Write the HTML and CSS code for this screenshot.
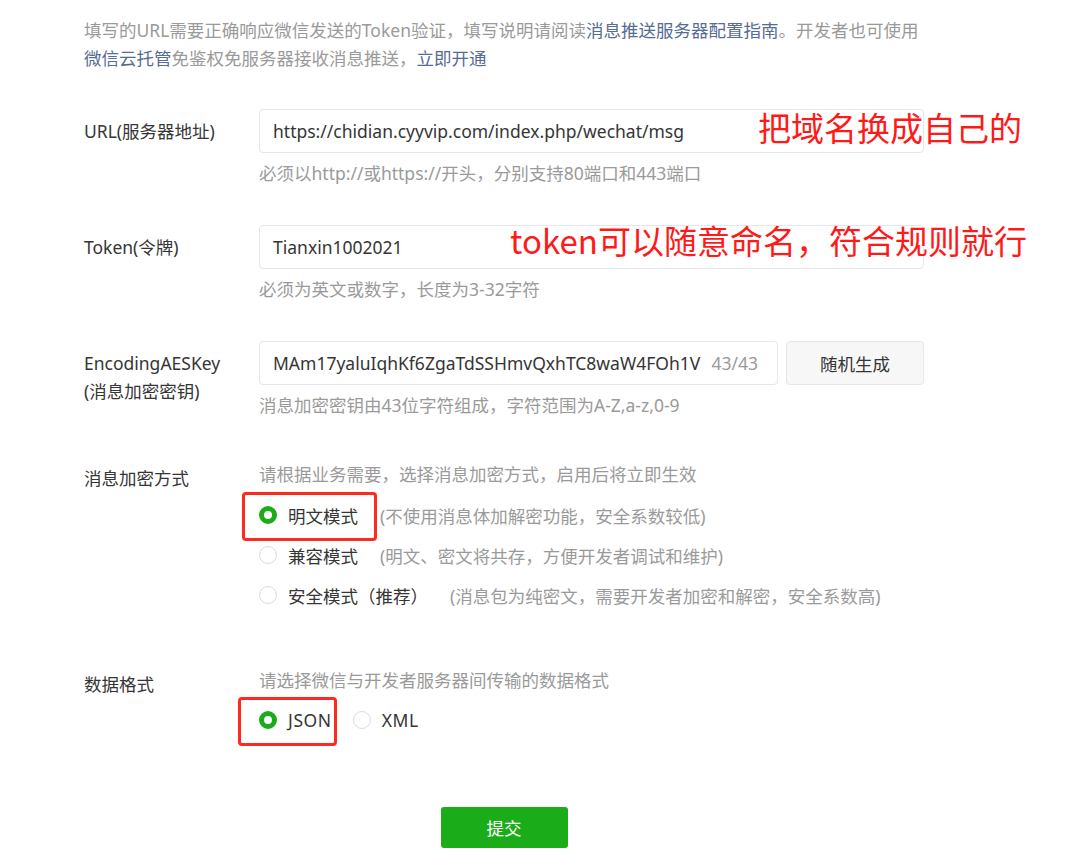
FILE: index.html
```html
<!DOCTYPE html>
<html lang="zh-CN">
<head>
<meta charset="utf-8">
<title>服务器配置</title>
<link rel="stylesheet" href="styles.css">
</head>
<body>
<div class="page">
  <p class="intro">填写的URL需要正确响应微信发送的Token验证，填写说明请阅读<a class="link">消息推送服务器配置指南</a>。开发者也可使用<br><a class="link">微信云托管</a>免鉴权免服务器接收消息推送，<a class="link">立即开通</a></p>

  <div class="form-row row-url">
    <div class="label">URL(服务器地址)</div>
    <div class="control">
      <div class="input"><span class="value">https://chidian.cyyvip.com/index.php/wechat/msg</span></div>
      <div class="hint">必须以http://或https://开头，分别支持80端口和443端口</div>
    </div>
  </div>

  <div class="form-row row-gap">
    <div class="label">Token(令牌)</div>
    <div class="control">
      <div class="input"><span class="value">Tianxin1002021</span></div>
      <div class="hint">必须为英文或数字，长度为3-32字符</div>
    </div>
  </div>

  <div class="form-row row-gap">
    <div class="label">EncodingAESKey<br>(消息加密密钥)</div>
    <div class="control">
      <div class="input-group">
        <div class="input input-key"><span class="value clip">MAm17yaluIqhKf6ZgaTdSSHmvQxhTC8waW4FOh1V</span><span class="counter">43/43</span></div>
        <button class="btn-default">随机生成</button>
      </div>
      <div class="hint">消息加密密钥由43位字符组成，字符范围为A-Z,a-z,0-9</div>
    </div>
  </div>

  <div class="form-row row-enc">
    <div class="label label-plain">消息加密方式</div>
    <div class="control">
      <div class="hint hint-top">请根据业务需要，选择消息加密方式，启用后将立即生效</div>
      <div class="radio-list">
        <div class="radio-item"><span class="radio checked"></span><span class="radio-text">明文模式</span><span class="radio-desc">(不使用消息体加解密功能，安全系数较低)</span></div>
        <div class="radio-item"><span class="radio"></span><span class="radio-text">兼容模式</span><span class="radio-desc">(明文、密文将共存，方便开发者调试和维护)</span></div>
        <div class="radio-item"><span class="radio"></span><span class="radio-text">安全模式（推荐）</span><span class="radio-desc">(消息包为纯密文，需要开发者加密和解密，安全系数高)</span></div>
      </div>
    </div>
  </div>

  <div class="form-row row-data">
    <div class="label label-plain">数据格式</div>
    <div class="control">
      <div class="hint hint-top">请选择微信与开发者服务器间传输的数据格式</div>
      <div class="radio-inline">
        <div class="radio-item"><span class="radio checked"></span><span class="radio-text">JSON</span></div>
        <div class="radio-item"><span class="radio"></span><span class="radio-text">XML</span></div>
      </div>
    </div>
  </div>

  <div class="actions">
    <button class="btn-primary">提交</button>
  </div>

  <div class="note note-1">把域名换成自己的</div>
  <div class="note note-2">token可以随意命名，符合规则就行</div>
  <div class="mark mark-1"></div>
  <div class="mark mark-2"></div>
</div>
</body>
</html>
```

FILE: styles.css
```css
* { box-sizing: border-box; }

html, body {
  margin: 0;
  padding: 0;
  background: #ffffff;
}

body {
  font-family: "Noto Sans", "Noto Sans CJK SC", sans-serif;
  font-size: 17.5px;
  color: #353535;
}

.page {
  position: relative;
  width: 840px;
  margin-left: 84px;
  padding-top: 16px;
  padding-bottom: 17px;
}

.intro {
  margin: 0;
  line-height: 28px;
  color: #9a9a9a;
}

.link {
  color: #576b95;
  text-decoration: none;
}

.form-row {
  display: flex;
}

.row-url { margin-top: 37px; }
.row-gap { margin-top: 40px; }
.row-enc { margin-top: 45px; }
.row-data { margin-top: 53px; }

.label {
  width: 175px;
  flex: none;
  line-height: 28px;
  padding-top: 8px;
  color: #353535;
}

.label-plain {
  padding-top: 2px;
}

.control {
  width: 665px;
  flex: none;
}

.input {
  height: 44px;
  border: 1px solid #e4e6eb;
  border-radius: 4px;
  background: #fff;
  display: flex;
  align-items: center;
  padding: 0 14px 0 13px;
  color: #353535;
}

.value {
  white-space: nowrap;
}

.clip {
  flex: 1;
  overflow: hidden;
  min-width: 0;
}

.counter {
  flex: none;
  margin-left: 4px;
  color: #9a9a9a;
}

.input-group {
  display: flex;
  gap: 8px;
}

.input-key {
  flex: 1;
  padding-right: 19px;
}

.btn-default {
  flex: none;
  width: 138px;
  height: 44px;
  border: 1px solid #e4e6eb;
  border-radius: 4px;
  background: #f7f7f7;
  color: #353535;
  font: inherit;
  padding: 0;
}

.hint {
  margin-top: 8px;
  line-height: 24px;
  color: #9a9a9a;
}

.hint-top {
  margin-top: 0;
}

.radio-list {
  margin-top: 9px;
}

.radio-inline {
  margin-top: 8px;
  display: flex;
}

.radio-item {
  height: 40px;
  display: flex;
  align-items: center;
}

.radio-inline .radio-item {
  margin-right: 21px;
}

.radio-inline .radio-text {
  letter-spacing: 0.6px;
}

.radio {
  width: 18px;
  height: 18px;
  border-radius: 50%;
  border: 1px solid #dcdcdc;
  background: #fff;
  flex: none;
  margin-right: 11px;
}

.radio.checked {
  border: 5px solid #1aad19;
}

.radio-text {
  color: #353535;
}

.radio-desc {
  margin-left: 22px;
  color: #9a9a9a;
}

.actions {
  margin-top: 67px;
  display: flex;
  justify-content: center;
}

.btn-primary {
  width: 127px;
  height: 41px;
  border: none;
  border-radius: 3px;
  background: #1aad19;
  color: #ffffff;
  font: inherit;
  padding: 0;
}

/* annotation overlays */
.note {
  position: absolute;
  font-family: "Noto Sans CJK SC", sans-serif;
  font-size: 33px;
  line-height: 33px;
  color: #ff1a1a;
  white-space: nowrap;
}

.note-1 { left: 674px; top: 111px; }
.note-2 { left: 426px; top: 224px; }

.mark {
  position: absolute;
  border: 3px solid #ff2a1f;
  border-radius: 4px;
}

.mark-1 { left: 158px; top: 492px; width: 135px; height: 49px; }
.mark-2 { left: 154px; top: 697px; width: 99px; height: 49px; }
```
